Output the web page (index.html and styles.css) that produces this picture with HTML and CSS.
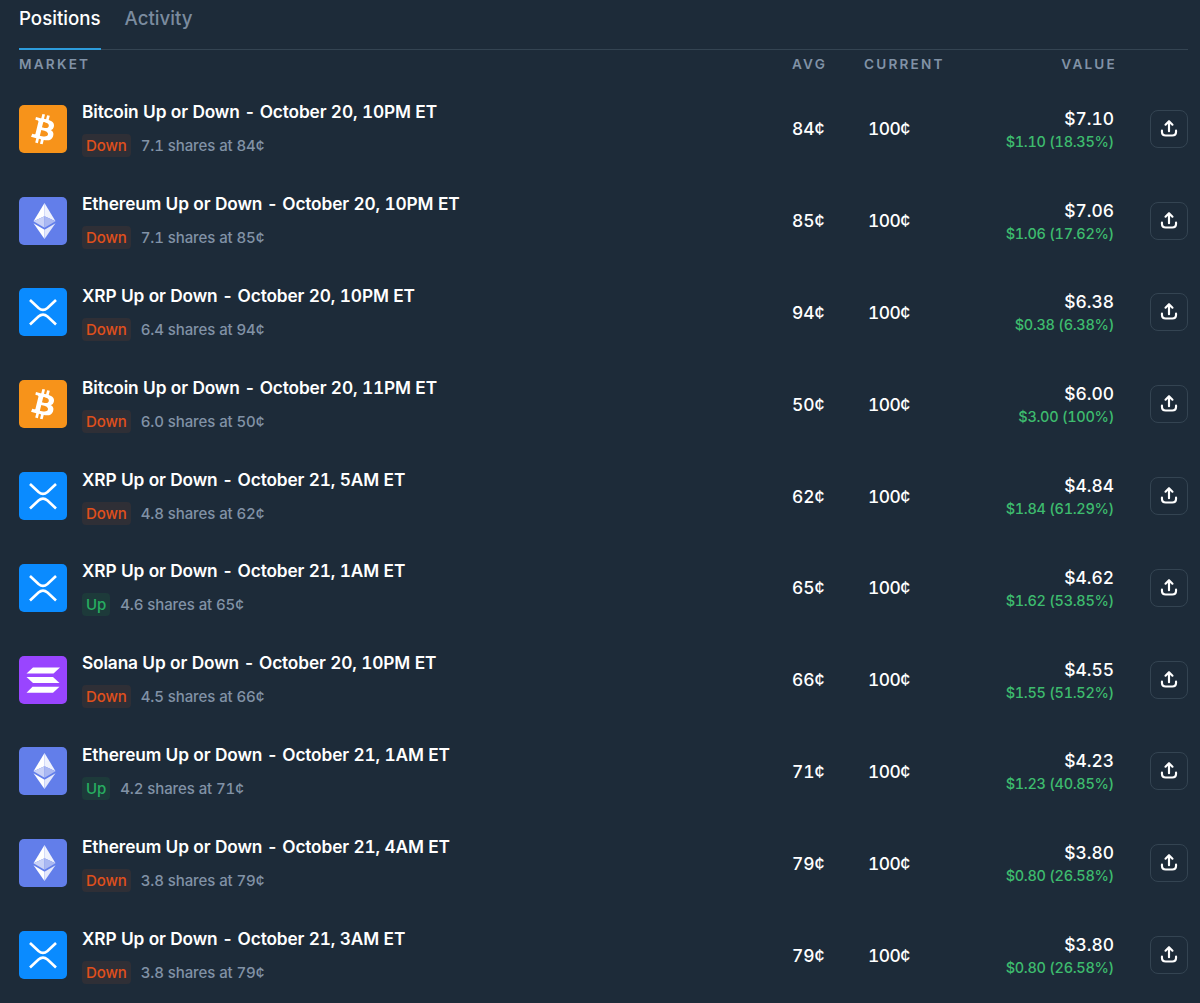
FILE: index.html
```html
<!DOCTYPE html>
<html>
<head>
	<title>Positions</title>
	<link rel="stylesheet" href="styles.css">
</head>
<body>
	<svg class="defs" width="0" height="0">
		<symbol id="btc" viewBox="0 0 48 48">
			<rect width="48" height="48" rx="5" fill="#f7931a"/>
			<path transform="translate(0.4 0.6) scale(2)" fill="#fff" fill-rule="evenodd" d="M17.288 10.291c.24-1.59-.974-2.45-2.64-3.03l.54-2.153-1.315-.33-.525 2.107c-.345-.087-.705-.167-1.064-.25l.526-2.127-1.32-.33-.54 2.165c-.285-.067-.565-.132-.84-.2l-1.815-.45-.35 1.407s.975.225.955.236c.535.136.63.486.615.766l-1.477 5.92c-.075.166-.24.406-.614.314.015.02-.96-.24-.96-.24l-.66 1.51 1.71.426.93.242-.54 2.19 1.32.327.54-2.17c.36.1.705.19 1.05.273l-.51 2.154 1.32.33.545-2.19c2.24.427 3.93.257 4.64-1.774.57-1.637-.03-2.58-1.217-3.196.854-.193 1.5-.76 1.68-1.93h.01zm-3.01 4.22c-.404 1.64-3.157.75-4.05.53l.72-2.9c.896.23 3.757.67 3.33 2.37zm.41-4.24c-.37 1.49-2.662.735-3.405.55l.654-2.64c.744.18 3.137.524 2.75 2.084v.006z"/>
		</symbol>
		<symbol id="eth" viewBox="0 0 48 48">
			<rect width="48" height="48" rx="5" fill="#627eea"/>
			<path fill="#fff" d="M25.500 6 L14.500 24.200 L25.500 19.200z"/>
			<path fill="#fff" fill-opacity=".9" d="M25.500 6 L36.500 24.200 L25.500 19.200z"/>
			<path fill="#c9d2f7" d="M25.500 19.200 L14.500 24.200 L25.500 30.700z"/>
			<path fill="#aab8f2" d="M25.500 19.200 L36.500 24.200 L25.500 30.700z"/>
			<path fill="#fff" d="M14.500 26.300 L25.500 42 L25.500 32.800z"/>
			<path fill="#e4e8fb" d="M36.500 26.300 L25.500 42 L25.500 32.800z"/>
		</symbol>
		<symbol id="xrp" viewBox="0 0 48 48">
			<rect width="48" height="48" rx="5" fill="#0a8bff"/>
			<path fill="none" stroke="#fff" stroke-width="2.600" d="M11 12 L19.500 20 C22.500 22.600 25.500 22.600 28.500 20 L37 12"/>
			<path fill="none" stroke="#fff" stroke-width="2.600" d="M11 36.500 L19.500 28.500 C22.500 25.900 25.500 25.900 28.500 28.500 L37 36.500"/>
		</symbol>
		<symbol id="sol" viewBox="0 0 48 48">
			<rect width="48" height="48" rx="5" fill="#9945ff"/>
			<path fill="#fff" d="M14 11.500 H41 L34.500 17.500 H7.500z"/>
			<path fill="#fff" d="M7.500 21 H34 L40.500 27 H14z"/>
			<path fill="#fff" d="M13.500 30.800 H40.500 L34 36.800 H7.500z"/>
		</symbol>
		<symbol id="share" viewBox="0 0 24 24">
			<path fill="none" stroke="#fff" stroke-width="2" stroke-linecap="round" stroke-linejoin="round" d="M12 14 V5 M8.800 8 L12 4.800 L15.200 8 M5.500 13.500 V14.500 C5.500 16.800 6.800 18 9 18 H15 C17.200 18 18.500 16.800 18.500 14.500 V13.500"/>
		</symbol>
	</svg>

	<div class="tabs">
		<a class="tab activo">Positions</a>
		<a class="tab">Activity</a>
	</div>

	<div class="fila cabecera">
		<div class="mercado">MARKET</div>
		<div class="avg">AVG</div>
		<div class="current">CURRENT</div>
		<div class="value">VALUE</div>
	</div>

	<div class="fila item">
		<div class="mercado">
			<svg class="logo"><use href="#btc"/></svg>
			<div class="texto">
				<div class="titulo">Bitcoin Up or Down - October 20, 10PM ET</div>
				<div class="detalle"><span class="badge down">Down</span>7.1 shares at 84¢</div>
			</div>
		</div>
		<div class="avg">84¢</div>
		<div class="current">100¢</div>
		<div class="value">$7.10<small>$1.10 (18.35%)</small></div>
		<button class="compartir"><svg><use href="#share"/></svg></button>
	</div>

	<div class="fila item">
		<div class="mercado">
			<svg class="logo"><use href="#eth"/></svg>
			<div class="texto">
				<div class="titulo">Ethereum Up or Down - October 20, 10PM ET</div>
				<div class="detalle"><span class="badge down">Down</span>7.1 shares at 85¢</div>
			</div>
		</div>
		<div class="avg">85¢</div>
		<div class="current">100¢</div>
		<div class="value">$7.06<small>$1.06 (17.62%)</small></div>
		<button class="compartir"><svg><use href="#share"/></svg></button>
	</div>

	<div class="fila item">
		<div class="mercado">
			<svg class="logo"><use href="#xrp"/></svg>
			<div class="texto">
				<div class="titulo">XRP Up or Down - October 20, 10PM ET</div>
				<div class="detalle"><span class="badge down">Down</span>6.4 shares at 94¢</div>
			</div>
		</div>
		<div class="avg">94¢</div>
		<div class="current">100¢</div>
		<div class="value">$6.38<small>$0.38 (6.38%)</small></div>
		<button class="compartir"><svg><use href="#share"/></svg></button>
	</div>

	<div class="fila item">
		<div class="mercado">
			<svg class="logo"><use href="#btc"/></svg>
			<div class="texto">
				<div class="titulo">Bitcoin Up or Down - October 20, 11PM ET</div>
				<div class="detalle"><span class="badge down">Down</span>6.0 shares at 50¢</div>
			</div>
		</div>
		<div class="avg">50¢</div>
		<div class="current">100¢</div>
		<div class="value">$6.00<small>$3.00 (100%)</small></div>
		<button class="compartir"><svg><use href="#share"/></svg></button>
	</div>

	<div class="fila item">
		<div class="mercado">
			<svg class="logo"><use href="#xrp"/></svg>
			<div class="texto">
				<div class="titulo">XRP Up or Down - October 21, 5AM ET</div>
				<div class="detalle"><span class="badge down">Down</span>4.8 shares at 62¢</div>
			</div>
		</div>
		<div class="avg">62¢</div>
		<div class="current">100¢</div>
		<div class="value">$4.84<small>$1.84 (61.29%)</small></div>
		<button class="compartir"><svg><use href="#share"/></svg></button>
	</div>

	<div class="fila item">
		<div class="mercado">
			<svg class="logo"><use href="#xrp"/></svg>
			<div class="texto">
				<div class="titulo">XRP Up or Down - October 21, 1AM ET</div>
				<div class="detalle"><span class="badge up">Up</span>4.6 shares at 65¢</div>
			</div>
		</div>
		<div class="avg">65¢</div>
		<div class="current">100¢</div>
		<div class="value">$4.62<small>$1.62 (53.85%)</small></div>
		<button class="compartir"><svg><use href="#share"/></svg></button>
	</div>

	<div class="fila item">
		<div class="mercado">
			<svg class="logo"><use href="#sol"/></svg>
			<div class="texto">
				<div class="titulo">Solana Up or Down - October 20, 10PM ET</div>
				<div class="detalle"><span class="badge down">Down</span>4.5 shares at 66¢</div>
			</div>
		</div>
		<div class="avg">66¢</div>
		<div class="current">100¢</div>
		<div class="value">$4.55<small>$1.55 (51.52%)</small></div>
		<button class="compartir"><svg><use href="#share"/></svg></button>
	</div>

	<div class="fila item">
		<div class="mercado">
			<svg class="logo"><use href="#eth"/></svg>
			<div class="texto">
				<div class="titulo">Ethereum Up or Down - October 21, 1AM ET</div>
				<div class="detalle"><span class="badge up">Up</span>4.2 shares at 71¢</div>
			</div>
		</div>
		<div class="avg">71¢</div>
		<div class="current">100¢</div>
		<div class="value">$4.23<small>$1.23 (40.85%)</small></div>
		<button class="compartir"><svg><use href="#share"/></svg></button>
	</div>

	<div class="fila item">
		<div class="mercado">
			<svg class="logo"><use href="#eth"/></svg>
			<div class="texto">
				<div class="titulo">Ethereum Up or Down - October 21, 4AM ET</div>
				<div class="detalle"><span class="badge down">Down</span>3.8 shares at 79¢</div>
			</div>
		</div>
		<div class="avg">79¢</div>
		<div class="current">100¢</div>
		<div class="value">$3.80<small>$0.80 (26.58%)</small></div>
		<button class="compartir"><svg><use href="#share"/></svg></button>
	</div>

	<div class="fila item">
		<div class="mercado">
			<svg class="logo"><use href="#xrp"/></svg>
			<div class="texto">
				<div class="titulo">XRP Up or Down - October 21, 3AM ET</div>
				<div class="detalle"><span class="badge down">Down</span>3.8 shares at 79¢</div>
			</div>
		</div>
		<div class="avg">79¢</div>
		<div class="current">100¢</div>
		<div class="value">$3.80<small>$0.80 (26.58%)</small></div>
		<button class="compartir"><svg><use href="#share"/></svg></button>
	</div>
</body>
</html>
```

FILE: styles.css
```css
html, body
{
	height: 100%;
}
body
{
	margin: 0;
	padding: 0 12px 0 19px;
	box-sizing: border-box;
	background-color: #1d2b39;
	color: #fff;
	font-family: Inter, "Liberation Sans", sans-serif;
	font-variant-numeric: tabular-nums;
	overflow: hidden;
}
.defs
{
	position: absolute;
}
.tabs
{
	display: flex;
	gap: 24px;
	height: 50px;
	box-sizing: border-box;
	border-bottom: 1px solid #344452;
}
.tab
{
	height: 50px;
	box-sizing: border-box;
	padding-top: 7px;
	font-size: 18.7px;
	line-height: 24px;
	font-weight: 500;
	color: #7b8b9f;
}
.activo
{
	color: #fff;
	border-bottom: 2px solid #2d9cdb;
}
.fila
{
	display: grid;
	grid-template-columns: 773px 72px 99px 153px 1fr 38px;
	align-items: center;
}
.cabecera
{
	height: 27px;
	margin-bottom: 6px;
	font-size: 13.6px;
	font-weight: 600;
	letter-spacing: 2.2px;
	color: #8192a6;
}
.cabecera .value
{
	margin-right: -1px;
}
.item
{
	height: 91.8px;
}
.mercado
{
	display: flex;
	align-items: center;
	gap: 15px;
}
.logo
{
	width: 48px;
	height: 48px;
	flex: none;
}
.texto
{
	padding-top: 2px;
}
.titulo
{
	font-size: 17.3px;
	line-height: 20px;
	letter-spacing: -0.14px;
	font-weight: 600;
}
.detalle
{
	display: flex;
	align-items: center;
	gap: 10px;
	margin-top: 12px;
	font-size: 15px;
	line-height: 23px;
	letter-spacing: -0.1px;
	font-weight: 500;
	color: #8192a6;
}
.badge
{
	padding: 0 4px;
	border-radius: 4px;
}
.down
{
	color: #e0501c;
	background-color: #2f2f36;
}
.up
{
	color: #27ae60;
	background-color: #1d3a3a;
}
.item .avg, .item .current
{
	font-size: 17.4px;
	font-weight: 500;
}
.item .current
{
	padding-left: 4px;
	letter-spacing: -0.5px;
}
.value
{
	text-align: right;
}
.item .value
{
	padding-top: 2px;
	padding-right: 2px;
	font-size: 17.4px;
	line-height: 23px;
	font-weight: 500;
}
.value small
{
	display: block;
	font-size: 14.5px;
	line-height: 23px;
	letter-spacing: -0.3px;
	color: #3dbb6e;
}
.compartir
{
	grid-column: 6;
	width: 38px;
	height: 38px;
	padding: 0;
	display: flex;
	align-items: center;
	justify-content: center;
	background: none;
	border: 1px solid #344452;
	border-radius: 8px;
}
.compartir svg
{
	width: 26px;
	height: 26px;
}
```
